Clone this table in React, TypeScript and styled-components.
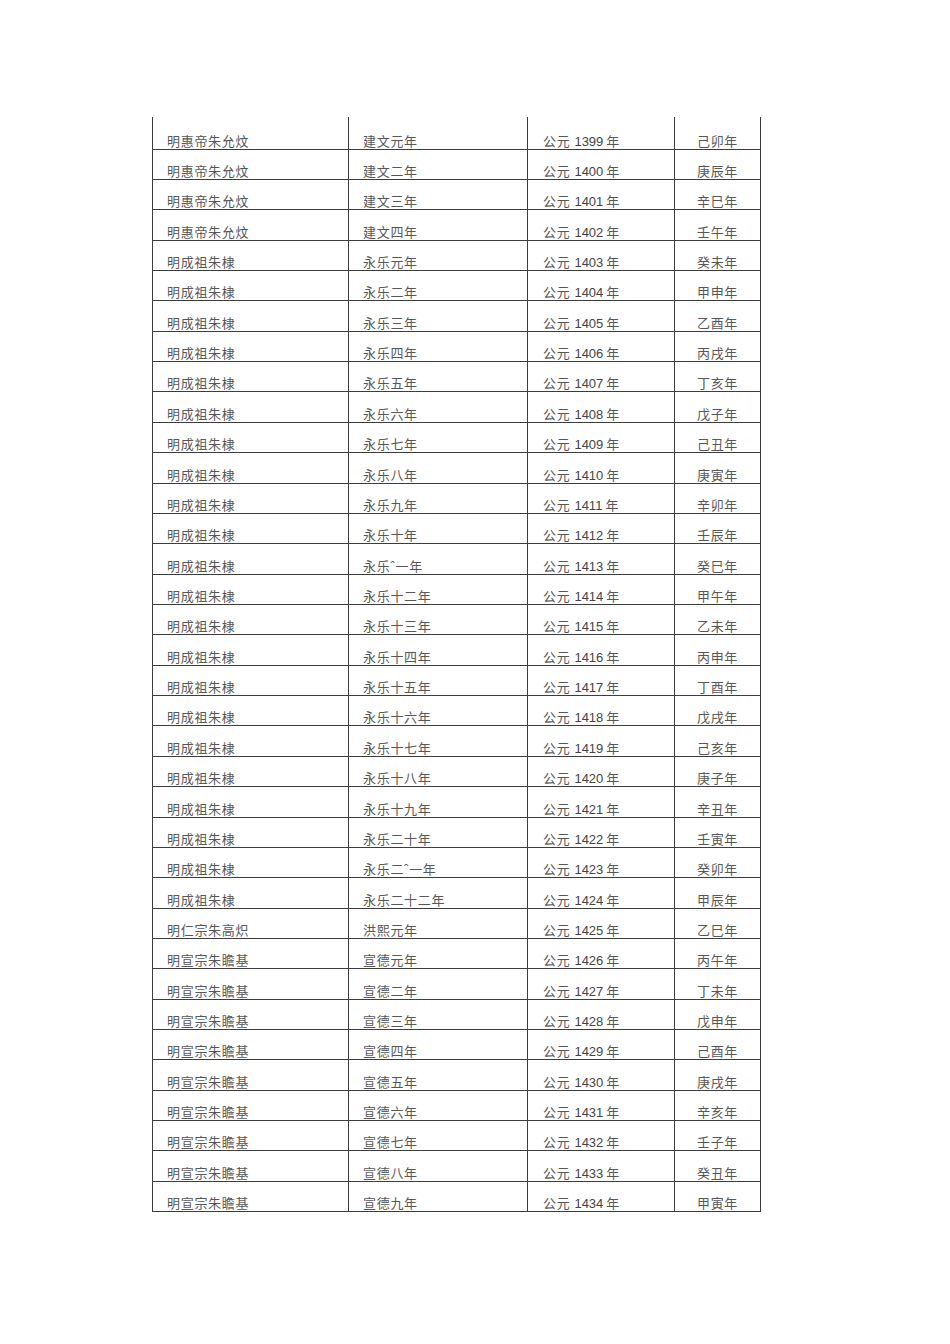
import styled, { createGlobalStyle } from "styled-components";

const GlobalStyle = createGlobalStyle`
  body {
    margin: 0;
    background: #ffffff;
  }
`;

const Page = styled.div`
  width: 950px;
  min-height: 1344px;
  padding: 117px 0 0 152px;
  box-sizing: border-box;
  font-family: "Liberation Sans", "Noto Sans CJK SC", sans-serif;
  color: #575757;
`;

const Table = styled.div`
  width: 609px;
  border-left: 1px solid #3c3c3c;
  box-sizing: border-box;
`;

const Row = styled.div<{ $first?: boolean }>`
  display: grid;
  grid-template-columns: 196px 179px 147px 86px;
  height: ${(p) => (p.$first ? "32.6px" : "30.37px")};
  border-bottom: 1px solid #3c3c3c;
  box-sizing: border-box;
`;

const Cell = styled.div<{ $pad?: number; $center?: boolean }>`
  display: flex;
  align-items: flex-end;
  justify-content: ${(p) => (p.$center ? "center" : "flex-start")};
  padding: 0 0 1px ${(p) => (p.$center ? 0 : p.$pad ?? 14)}px;
  border-right: 1px solid #3c3c3c;
  font-size: 13px;
  line-height: 13px;
  letter-spacing: 0.7px;
  white-space: nowrap;
  overflow: hidden;
`;

const Year = styled.span`
  letter-spacing: 0;
  color: #444444;
  margin: 0 3px 0 4px;
`;

const ganzhi = [
  "己卯年", "庚辰年", "辛巳年", "壬午年", "癸未年", "甲申年", "乙酉年", "丙戌年", "丁亥年",
  "戊子年", "己丑年", "庚寅年", "辛卯年", "壬辰年", "癸巳年", "甲午年", "乙未年", "丙申年",
  "丁酉年", "戊戌年", "己亥年", "庚子年", "辛丑年", "壬寅年", "癸卯年", "甲辰年", "乙巳年",
  "丙午年", "丁未年", "戊申年", "己酉年", "庚戌年", "辛亥年", "壬子年", "癸丑年", "甲寅年",
];

const eras = [
  "建文元年", "建文二年", "建文三年", "建文四年",
  "永乐元年", "永乐二年", "永乐三年", "永乐四年", "永乐五年", "永乐六年", "永乐七年",
  "永乐八年", "永乐九年", "永乐十年", "永乐ˆ一年", "永乐十二年", "永乐十三年", "永乐十四年",
  "永乐十五年", "永乐十六年", "永乐十七年", "永乐十八年", "永乐十九年", "永乐二十年",
  "永乐二ˆ一年", "永乐二十二年",
  "洪熙元年",
  "宣德元年", "宣德二年", "宣德三年", "宣德四年", "宣德五年", "宣德六年", "宣德七年",
  "宣德八年", "宣德九年",
];

const emperorFor = (i: number) => {
  if (i < 4) return "明惠帝朱允炆";
  if (i < 26) return "明成祖朱棣";
  if (i < 27) return "明仁宗朱高炽";
  return "明宣宗朱瞻基";
};

const App: React.FC = () => {
  return (
    <Page>
      <GlobalStyle />
      <Table>
        {eras.map((era, i) => (
          <Row key={i} $first={i === 0}>
            <Cell>{emperorFor(i)}</Cell>
            <Cell>{era}</Cell>
            <Cell $pad={15}>
              公元<Year>{1399 + i}</Year>年
            </Cell>
            <Cell $center>{ganzhi[i]}</Cell>
          </Row>
        ))}
      </Table>
    </Page>
  );
};

export default App;
